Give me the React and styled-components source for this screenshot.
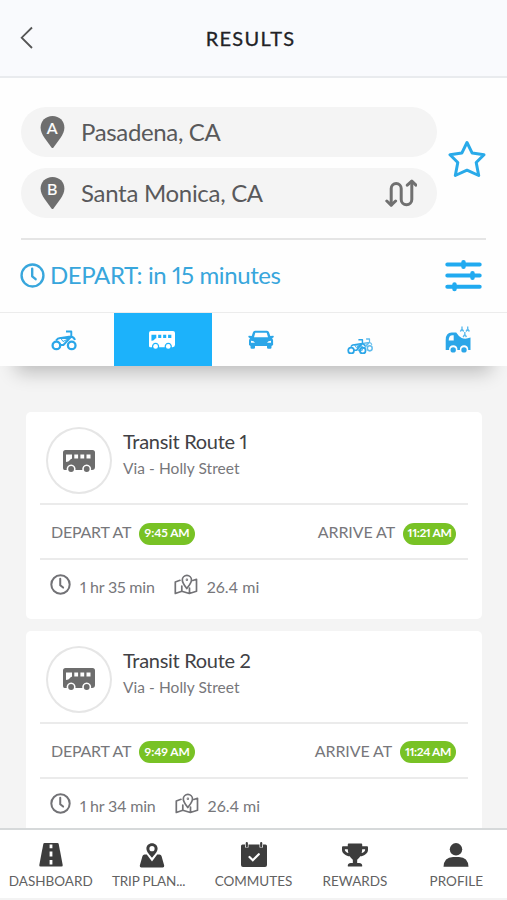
import React, { useState } from 'react';
import styled, { createGlobalStyle } from 'styled-components';
import { FaTrophy } from 'react-icons/fa';

const GlobalStyle = createGlobalStyle`
    * {
        box-sizing: border-box;
    }

    body {
        margin: 0;
        font-family: Lato, "Open Sans", sans-serif;
        font-variant-numeric: proportional-nums;
        background: #f4f4f4;
    }
`
const Screen = styled.div`
    display: flex;
    flex-direction: column;
    width: 507px;
    height: 900px;
    overflow: hidden;
    background: #f4f4f4;
`
const Text = styled.span`
    font-size: ${(props) => props.$size}px;
    letter-spacing: ${(props) => props.$spacing || 0}px;
    font-weight: ${(props) => props.$weight || 400};
    color: ${(props) => props.$color || '#77777b'};
    line-height: 1.2;
    white-space: nowrap;
`
const Header = styled.header`
    display: grid;
    grid-template-columns: 60px 1fr 67px;
    align-items: center;
    flex: none;
    height: 78px;
    padding-left: 1px;
    background: #f9fafd;
    border-bottom: 2px solid #e9ebee;
`
const BackButton = styled.button`
    display: flex;
    padding: 0 0 0 19px;
    border: 0;
    background: none;
`
const Title = styled.h1`
    margin: 0 0 1px;
    text-align: center;
    font-size: 20px;
    line-height: 24px;
    font-weight: 400;
    letter-spacing: 1.3px;
    color: #222226;
    -webkit-text-stroke: 0.3px #222226;
`
const SearchPanel = styled.section`
    position: relative;
    z-index: 1;
    flex: none;
    height: 288px;
    background: #fefefe;
    box-shadow: 0 22px 18px -16px rgba(0, 0, 0, 0.24);
`
const Places = styled.div`
    display: flex;
    align-items: center;
    height: 162px;
    margin: 0 21px;
    padding-top: 8px;
    border-bottom: 2px solid #e5e5e5;

    > svg {
        margin-bottom: 6px;
    }
`
const Fields = styled.div`
    display: flex;
    flex-direction: column;
    gap: 11px;
    width: 416px;
    margin-right: 11px;
`
const Field = styled.div`
    display: flex;
    align-items: center;
    height: 50px;
    padding: 0 20px 0 19px;
    border-radius: 25px;
    background: #f4f4f4;

    > span {
        flex: 1;
        margin: 2px 0 0 16px;
    }
`
const DepartRow = styled.div`
    display: flex;
    align-items: center;
    justify-content: space-between;
    height: 72px;
    padding: 0 25px 1px 20px;
`
const Depart = styled.div`
    display: flex;
    align-items: center;
    gap: 5px;
`
const Tabs = styled.nav`
    display: flex;
    height: 54px;
    padding-left: 15px;
    margin-right: -1px;
    border-top: 1px solid #ececec;
`
const Tab = styled.button`
    display: flex;
    flex: 1;
    align-items: center;
    justify-content: center;
    padding: 1px 1px 0 0;
    border: 0;
    color: ${(props) => (props.$active ? '#ffffff' : '#2ba6e8')};
    background: ${(props) => (props.$active ? '#1cb2fb' : 'none')};
`
const Routes = styled.main`
    display: flex;
    flex: 1;
    flex-direction: column;
    gap: 12px;
    min-height: 0;
    padding: 46px 25px 0 26px;
    overflow: hidden;
`
const Card = styled.article`
    flex: none;
    height: 206.6px;
    padding: 0 14px;
    border-radius: 5px;
    background: #ffffff;
`
const CardTop = styled.div`
    display: flex;
    height: 93px;
    padding: 15px 0 0 6px;
    border-bottom: 2px solid #ebebeb;
`
const Badge = styled.div`
    display: flex;
    align-items: center;
    justify-content: center;
    width: 66px;
    height: 67px;
    border: 2px solid #e6e6e6;
    border-radius: 50%;
    color: #6d6d6d;
`
const RouteName = styled.div`
    display: flex;
    flex-direction: column;
    gap: 6px;
    margin: 2px 0 0 11px;
`
const Times = styled.div`
    display: flex;
    align-items: center;
    justify-content: space-between;
    height: 55px;
    padding: 1px 12px 0 11px;
    border-bottom: 2px solid #ebebeb;
`
const Time = styled.div`
    display: flex;
    align-items: center;
    gap: 8px;
`
const Pill = styled.span`
    display: flex;
    align-items: center;
    justify-content: center;
    width: ${(props) => props.$width}px;
    height: 22px;
    margin-top: 3px;
    border-radius: 11px;
    background: #78c225;
`
const Facts = styled.div`
    display: flex;
    align-items: center;
    height: 49px;
    padding: 0 0 0 10px;

    > span {
        margin: 4px 19px 0 9px;
    }
`
const Footer = styled.footer`
    display: flex;
    position: relative;
    flex: none;
    height: 72px;
    background: #ffffff;
    border-top: 2px solid #d6d9da;
    border-bottom: 2px solid #f3f3f3;
`
const FooterItem = styled.button`
    display: flex;
    flex: 1;
    flex-direction: column;
    align-items: center;
    gap: 5px;
    min-width: 0;
    padding: 12px 0 0;
    border: 0;
    font-family: inherit;
    color: #3d3d3d;
    background: none;

    svg {
        flex: none;
    }

    span {
        margin-left: ${(props) => props.$shift || 0}px;
    }
`

const BackIcon = () => (
    <svg width="14" height="24" viewBox="0 0 14 24" fill="none" stroke="#555" strokeWidth="1.8">
        <path d="M12 1.5 1.7 11.7 12 22" />
    </svg>
)

const Pin = ({ letter }) => (
    <svg width="25" height="32" viewBox="0 0 25 32">
        <path d="M12.5 0C5.6 0 .6 5.1.6 11.6c0 4 1.6 6.9 3.8 10.2l7.1 9.6q1 1 2 0l7.1-9.6c2.2-3.3 3.8-6.2 3.8-10.2C24.4 5.1 19.4 0 12.5 0Z" fill="#6e6e6e" />
        <text x="12.2" y="18" textAnchor="middle" fontFamily="Lato" fontSize="16" fill="#fff" stroke="#fff" strokeWidth=".2">{letter}</text>
    </svg>
)

const SwapIcon = () => (
    <svg width="32" height="28" viewBox="0 0 32 28" fill="none" stroke="#707070" strokeWidth="3" strokeLinecap="round" strokeLinejoin="round">
        <path d="M6.2 26V9.500a5 5 0 0 1 10 0v11a5.300 5.300 0 0 0 10.600 0V2.500" />
        <path d="m1.800 22 4.400 4.200 4.400-4.200M22.300 6.200l4.500-4.100L31 6.200" />
    </svg>
)

const StarIcon = () => (
    <svg width="38" height="38" viewBox="0 0 38 38" fill="none" stroke="#29aae9" strokeWidth="3" strokeLinejoin="round">
        <path d="m19 2.500 5.200 10.600L36 14.800l-7.800 7.700 2.500 13L19 30.200 7.300 35.500l2.500-13L2 14.800l11.800-1.700Z" />
    </svg>
)

const ClockIcon = ({ size, color }) => (
    <svg width={size} height={size} viewBox="0 0 24 24" fill="none" stroke={color} strokeWidth="2.300" strokeLinecap="round" strokeLinejoin="round">
        <circle cx="12" cy="12" r="10.500" />
        <path d="M11.700 5.500v7.300l3.300 2.700" />
    </svg>
)

const FilterIcon = () => (
    <svg width="37" height="32" viewBox="0 0 37 32" fill="none" stroke="#20aaf0" strokeWidth="4" strokeLinecap="round">
        <path d="M2.300 4.500h32.400M2.300 15.500h32.400M2.300 26.700h32.400" />
        <path d="M18.500 2.300v4.400M27.500 13.300v4.400M9.500 24.500v4.400" strokeWidth="4.500" />
    </svg>
)

const BusIcon = ({ width }) => (
    <svg width={width} height={width * 0.6875} viewBox="0 0 32 22" fill="currentColor">
        <path
            fillRule="evenodd"
            d="M2.500 0h27Q32 0 32 2.500V17q0 3-3 3h-.9a4.500 4.500 0 1 0-8.800 0h-6.800a4.500 4.500 0 1 0-8.800 0H1.500Q0 20 0 18V2.500Q0 0 2.500 0ZM3 4.600V12q2.600 0 4-2 .7-1.200 2-1.200V4.600ZM11.300 4.600v4h3.800v-4ZM17.400 4.600v4h3.800v-4ZM23.500 4.600v4h4v-4Z"
        />
        <circle cx="8.100" cy="19" r="2.900" />
        <circle cx="23.700" cy="19" r="2.900" />
    </svg>
)

const BikeShape = () => (
    <g>
        <circle cx="5.400" cy="15.400" r="3.800" strokeWidth="2.300" />
        <circle cx="20.700" cy="15.400" r="3.800" strokeWidth="2.300" />
        <path d="M15 1.500h5.300v5L12.400 15H9M5 10.500q2-3 5-2.500l9.700-1.500Q23 7 24 10" strokeWidth="1.900" />
        <path d="M10 8.500h8l-6 3Z" strokeWidth="1" />
    </g>
)

const BikeIcon = () => (
    <svg width="26" height="22" viewBox="0 0 26 22" fill="none" stroke="currentColor" strokeLinejoin="round">
        <g transform="translate(0 1)"><BikeShape /></g>
    </svg>
)

const BikesIcon = () => (
    <svg width="26" height="27" viewBox="0 0 26 27" fill="none" stroke="currentColor" strokeLinejoin="round">
        <g transform="translate(9.500 11) scale(.64 .67)" opacity=".75"><BikeShape /></g>
        <g transform="translate(0 11.500) scale(.76 .78)"><BikeShape /></g>
    </svg>
)

const CarIcon = () => (
    <svg width="26" height="20" viewBox="0 0 26 20" fill="currentColor">
        <path
            fillRule="evenodd"
            d="M7 .7h12q1.500 0 2 1.500L22.300 6l2.800-.2q1 .3.500 1.500l-1.500 1q1 1 1 2.500V15l-1.600 1v1.500q0 1.200-1.200 1.200h-2q-1.300 0-1.300-1.200V16H7v1.500q0 1.200-1.300 1.200h-2q-1.200 0-1.200-1.200V16L1 15v-4.200q0-1.500 1-2.500l-1.500-1Q0 6 1 5.800L3.700 6 5 2.200Q5.500.7 7 .7ZM7.300 2.700 6 7.200h14l-1.300-4.500ZM3 10.700v2h4q-1-2-4-2ZM23 10.700q-3 0-4 2h4Z"
        />
    </svg>
)

const VanIcon = () => (
    <svg width="26" height="28" viewBox="0 0 26 28" fill="currentColor">
        <path
            fillRule="evenodd"
            d="M.7 24V14q0-7.500 6-7.500h4.500q2.500 4 5.500 5.500 4 1.500 8.800-.5V24h-2.300a4.200 4.200 0 1 0-8.300 0h-2.500a4.200 4.200 0 1 0-8.300 0H.7ZM3.700 14.500h5V9.300q-5-.8-5 5.200Z"
        />
        <circle cx="8.200" cy="23.900" r="2.700" />
        <circle cx="19" cy="23.900" r="2.700" />
        <g fill="none" stroke="currentColor" strokeWidth="1.400" opacity=".75">
            <path d="M17 .5V3M15.300 5.500 17 3l1.700 2.500M22.700.5V3M21 5.500 22.700 3l1.700 2.500M19.800 6v2.500M18.100 11l1.700-2.500 1.700 2.500" />
        </g>
    </svg>
)

const MapIcon = () => (
    <svg width="24" height="21" viewBox="0 0 24 21" fill="none" stroke="#727276" strokeWidth="1.700" strokeLinejoin="round" strokeLinecap="round">
        <path d="M6 6.300 1.300 8v11.500l6.500-2.300 7.500 2.300 7.200-2.300V5.300l-3.700 1.200M7.800 17v-5M15.500 19v-5" />
        <path d="M12.800 14.500C10.500 11.500 8.300 8.900 8.300 6a4.600 4.600 0 0 1 9.200 0c0 2.900-2.400 5.500-4.700 8.500Z" />
        <circle cx="12.900" cy="5.800" r=".4" />
    </svg>
)

const RoadIcon = () => (
    <svg width="26" height="26" viewBox="0 0 26 26">
        <path d="M6.500 1h13q1 0 1.200 1l4 21q.2 1.500-1.200 1.500h-21q-1.400 0-1.200-1.500l4-21q.2-1 1.200-1Z" fill="#3d3d3d" />
        <path d="M13 2.500v3.800M13 9.500v5M13 18v4.500" stroke="#fff" strokeWidth="2.800" />
    </svg>
)

const TripIcon = () => (
    <svg width="26" height="26" viewBox="0 0 26 26" fill="#3d3d3d">
        <path d="M5.500 12.500h2.300l5.200 7 5.200-7h2.300q1.500 0 2 1.500l2.700 9.500q.3 2-1.500 2H2.300q-1.800 0-1.500-2L3.500 14q.5-1.500 2-1.500Z" />
        <path fillRule="evenodd" d="M13 1.200c-3.200 0-5.600 2.300-5.600 5.300 0 3.500 3.300 6.200 5.600 9.300 2.300-3.100 5.600-5.800 5.600-9.300 0-3-2.400-5.300-5.600-5.300Zm0 2.900a2.600 2.600 0 1 1 0 5.200 2.600 2.600 0 0 1 0-5.200Z" />
    </svg>
)

const CalendarIcon = () => (
    <svg width="28" height="26" viewBox="0 0 28 26" fill="none" strokeLinecap="round">
        <path d="M2.500 2.500H5v3h3.500v-3h11v3H23v-3h2.500Q27 2.500 27 4v19q0 2-2 2H3q-2 0-2-2V4q0-1.500 1.500-1.500Z" fill="#3d3d3d" />
        <path d="M6.800 1.200v3M21.200 1.200v3" stroke="#3d3d3d" strokeWidth="2.200" />
        <path d="m9.500 15 3.300 3.200 6-6" stroke="#fff" strokeWidth="2.200" />
    </svg>
)

const ProfileIcon = () => (
    <svg width="26" height="26" viewBox="0 0 26 26" fill="#3d3d3d">
        <circle cx="13" cy="7.300" r="6.200" />
        <path d="M.5 24.700Q1 15.200 10 15h6q9 .2 9.500 9.700Z" />
    </svg>
)

const modes = [
    { id: 'bike', icon: <BikeIcon /> },
    { id: 'bus', icon: <BusIcon width={26} /> },
    { id: 'car', icon: <CarIcon /> },
    { id: 'bikes', icon: <BikesIcon /> },
    { id: 'van', icon: <VanIcon /> },
]

const routes = [
    { name: 'Transit Route 1', depart: '9:45 AM', arrive: '11:21 AM', arriveWidth: 53, duration: '1 hr 35 min' },
    { name: 'Transit Route 2', depart: '9:49 AM', arrive: '11:24 AM', arriveWidth: 56, duration: '1 hr 34 min' },
]

const menu = [
    { label: 'DASHBOARD', icon: <RoadIcon /> },
    { label: 'TRIP PLAN...', icon: <TripIcon />, shift: -7, spacing: -0.2 },
    { label: 'COMMUTES', icon: <CalendarIcon /> },
    { label: 'REWARDS', icon: <FaTrophy size={26} color="#3d3d3d" /> },
    { label: 'PROFILE', icon: <ProfileIcon /> },
]

const RouteCard = ({ route }) => (
    <Card>
        <CardTop>
            <Badge><BusIcon width={32} /></Badge>
            <RouteName>
                <Text $size={20} $spacing={-0.3} $color="#414145">{route.name}</Text>
                <Text $size={15.5} $spacing={0.05}>Via - Holly Street</Text>
            </RouteName>
        </CardTop>
        <Times>
            <Time>
                <Text $size={16} $spacing={-0.25}>DEPART AT</Text>
                <Pill $width={56}><Text $size={12} $spacing={-0.1} $weight={700} $color="#fff">{route.depart}</Text></Pill>
            </Time>
            <Time>
                <Text $size={16} $spacing={-0.1}>ARRIVE AT</Text>
                <Pill $width={route.arriveWidth}><Text $size={12} $spacing={-0.4} $weight={700} $color="#fff">{route.arrive}</Text></Pill>
            </Time>
        </Times>
        <Facts>
            <ClockIcon size={21} color="#727276" />
            <Text $size={16} $spacing={-0.2}>{route.duration}</Text>
            <MapIcon />
            <Text $size={16}>26.4 mi</Text>
        </Facts>
    </Card>
)

const App = function () {
    const [mode, setMode] = useState('bus');

    return (
        <Screen>
            <GlobalStyle />
            <Header>
                <BackButton><BackIcon /></BackButton>
                <Title>RESULTS</Title>
            </Header>
            <SearchPanel>
                <Places>
                    <Fields>
                        <Field>
                            <Pin letter="A" />
                            <Text $size={24} $spacing={-0.35} $color="#59595b">Pasadena, CA</Text>
                        </Field>
                        <Field>
                            <Pin letter="B" />
                            <Text $size={24} $spacing={-0.3} $color="#59595b">Santa Monica, CA</Text>
                            <SwapIcon />
                        </Field>
                    </Fields>
                    <StarIcon />
                </Places>
                <DepartRow>
                    <Depart>
                        <ClockIcon size={25} color="#38a6dc" />
                        <Text $size={24} $spacing={-0.4} $color="#38a6dc">DEPART: in 15 minutes</Text>
                    </Depart>
                    <FilterIcon />
                </DepartRow>
                <Tabs>
                    {modes.map((item) => (
                        <Tab key={item.id} $active={item.id === mode} onClick={() => setMode(item.id)}>
                            {item.icon}
                        </Tab>
                    ))}
                </Tabs>
            </SearchPanel>
            <Routes>
                {routes.map((route) => <RouteCard key={route.name} route={route} />)}
            </Routes>
            <Footer>
                {menu.map((item) => (
                    <FooterItem key={item.label} $shift={item.shift}>
                        {item.icon}
                        <Text $size={13.5} $spacing={item.spacing} $color="#626262">{item.label}</Text>
                    </FooterItem>
                ))}
            </Footer>
        </Screen>
    )
}

export default App
